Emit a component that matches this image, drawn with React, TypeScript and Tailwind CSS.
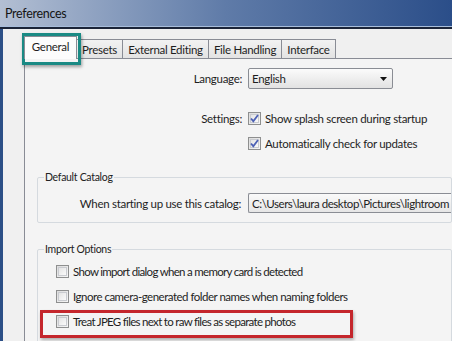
import React from "react";

const Check: React.FC<{ checked?: boolean }> = ({ checked }) => (
  <span className="relative flex h-[13px] w-[13px] shrink-0 items-center justify-center border border-[#8e8f8f] bg-gradient-to-br from-[#dcdcdc] to-[#f6f6f6]">
    <span className="absolute inset-[1px] border border-[#c9cbd0] bg-gradient-to-br from-[#e4e4e4] to-[#fafafa]" />
    {checked && (
      <svg viewBox="0 0 11 11" className="relative h-[11px] w-[11px]">
        <path d="M2 5.5 L4.3 8.2 L9 2" fill="none" stroke="#4d61b5" strokeWidth="1.8" />
      </svg>
    )}
  </span>
);

const tabs = [
  { label: "Presets", w: "w-[46px]" },
  { label: "External Editing", w: "w-[86px]" },
  { label: "File Handling", w: "w-[73px]" },
  { label: "Interface", w: "w-[54px]" },
];

const Option: React.FC<{ label: string; checked?: boolean; track?: string }> = ({ label, checked, track }) => (
  <div className="flex h-[15px] items-center gap-[4px] whitespace-nowrap">
    <Check checked={checked} />
    <span className={track}>{label}</span>
  </div>
);

export default function App() {
  return (
    <div
      className="relative h-[341px] w-[452px] overflow-hidden bg-[#f0f0f0] text-[11.5px] leading-[15px] tracking-[-0.3px] text-[#1e1e1e]"
      style={{ fontFamily: 'Lato, "Noto Sans", sans-serif' }}
    >
      {/* title bar */}
      <div className="flex h-[26px] items-center bg-gradient-to-r from-[#b3bfd3] via-[#5f7ba8] to-[#2b4e89] pl-[5px] text-[12.5px] text-[#141414]">
        Preferences
      </div>
      <div className="h-px bg-[#a9bedb]" />
      <div className="h-[2px] bg-[#1b2438]" />

      <div className="flex h-full">
        {/* left window frame */}
        <div className="w-[3px] bg-[#2c4f86]" />
        <div className="flex-1 pt-[6px] pl-[21px]">
          {/* tab strip */}
          <div className="flex h-[23px] items-end">
            <div className="relative z-10 -mb-px flex h-[23px] w-[53px] items-center justify-center border border-b-0 border-[#898c95] bg-[#fcfcfc] pb-[3px]">
              General
            </div>
            {tabs.map((t) => (
              <div
                key={t.label}
                className={`flex h-[19px] items-center justify-center whitespace-nowrap border border-l-0 border-b-0 border-[#898c95] bg-gradient-to-b from-[#f2f2f2] to-[#e3e3e3] ${t.w}`}
              >
                {t.label}
              </div>
            ))}
          </div>

          {/* tab panel */}
          <div className="h-[300px] border-t border-l border-[#898c95] bg-[#f4f4f4]">
            <div className="grid grid-cols-[217px_1fr] items-center gap-x-[6px] pt-[9px]">
              <div className="text-right">Language:</div>
              <div className="flex h-[21px] w-[145px] items-center justify-between rounded-[2px] border border-[#8a8d94] bg-gradient-to-b from-[#fbfbfb] to-[#e2e2e2] pr-[5px] pl-[3px]">
                <span>English</span>
                <svg viewBox="0 0 7 4" className="h-[4px] w-[7px]">
                  <path d="M0 0 H7 L3.5 4 Z" fill="#111" />
                </svg>
              </div>

              <div className="mt-[22px] text-right">Settings:</div>
              <div className="mt-[22px]">
                <Option label="Show splash screen during startup" checked />
              </div>

              <div />
              <div className="mt-[10px]">
                <Option label="Automatically check for updates" checked />
              </div>
            </div>

            {/* Default Catalog */}
            <fieldset className="mt-[20px] ml-[12px] h-[52px] rounded-[2px] border border-[#d5dadf]">
              <legend className="ml-[6px] px-px text-[10.5px] leading-[12px] text-[#222]">Default Catalog</legend>
              <div className="grid grid-cols-[203px_1fr] items-center gap-x-[7px] pt-[10px]">
                <div className="whitespace-nowrap text-right">When starting up use this catalog:</div>
                <div className="flex h-[20px] items-center overflow-hidden whitespace-nowrap rounded-l-[2px] border border-r-0 border-[#8a8d94] bg-gradient-to-b from-[#fafafa] to-[#e6e6e6] pl-[3px] tracking-[-0.45px]">
                  C:\Users\laura desktop\Pictures\lightroom
                </div>
              </div>
            </fieldset>

            {/* Import Options */}
            <fieldset className="mt-[20px] ml-[12px] h-[120px] rounded-[2px] border border-[#d5dadf] pl-[18px]">
              <legend className="-ml-[12px] px-px text-[10.5px] leading-[12px] text-[#222]">Import Options</legend>
              <div className="flex flex-col gap-[10px] pt-[9px]">
                <Option label="Show import dialog when a memory card is detected" track="tracking-[-0.7px]" />
                <Option label="Ignore camera-generated folder names when naming folders" track="tracking-[-0.5px]" />
                <Option label="Treat JPEG files next to raw files as separate photos" track="tracking-[-0.7px]" />
              </div>
            </fieldset>
          </div>
        </div>
      </div>

      {/* annotation: teal box around General tab */}
      <div className="pointer-events-none absolute top-[33px] left-[22px] h-[32px] w-[59px] border-[3px] border-[#1a8a84] shadow-[1px_2px_3px_rgba(0,0,0,0.35)]" />
      {/* annotation: red box around JPEG option */}
      <div className="pointer-events-none absolute top-[310px] left-[40px] h-[28px] w-[313px] border-[3px] border-[#c4262c] shadow-[1px_2px_3px_rgba(0,0,0,0.3)]" />
    </div>
  );
}
